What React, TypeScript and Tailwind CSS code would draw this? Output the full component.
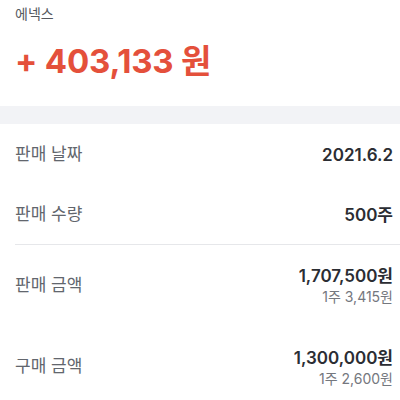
import React from "react";

const font = { fontFamily: 'Inter, "Noto Sans CJK KR", sans-serif' };

function Row({ label, value, sub, h }: { label: string; value: string; sub?: string; h: string }) {
  return (
    <div className={`flex items-center justify-between pl-[15px] pr-[7px] ${h}`}>
      <span className="text-[17px] text-[#62666d]">{label}</span>
      <div className="flex flex-col items-end">
        <span className="text-[17px] font-semibold text-[#2b2d33] leading-[22px]">{value}</span>
        {sub && <span className="text-[14px] text-[#74777e] leading-[18px] mt-[1px]">{sub}</span>}
      </div>
    </div>
  );
}

export default function App() {
  return (
    <div className="w-[400px] h-[400px] bg-white overflow-hidden" style={font}>
      <div className="h-[106px] pl-[15px]">
        <div className="text-[14px] text-[#55585e] leading-[18px] pt-[5px]">에넥스</div>
        <div className="mt-[18px] text-[33px] font-bold text-[#e4503b] leading-[40px] tracking-[-0.2px]">+ 403,133 원</div>
      </div>
      <div className="h-[18px] bg-[#f2f3f6]" />
      <Row label="판매 날짜" value="2021.6.2" h="h-[61px]" />
      <Row label="판매 수량" value="500주" h="h-[59px]" />
      <div className="ml-[15px] h-px bg-[#e6e7ea]" />
      <Row label="판매 금액" value="1,707,500원" sub="1주 3,415원" h="h-[81px]" />
      <Row label="구매 금액" value="1,300,000원" sub="1주 2,600원" h="h-[82px]" />
    </div>
  );
}
